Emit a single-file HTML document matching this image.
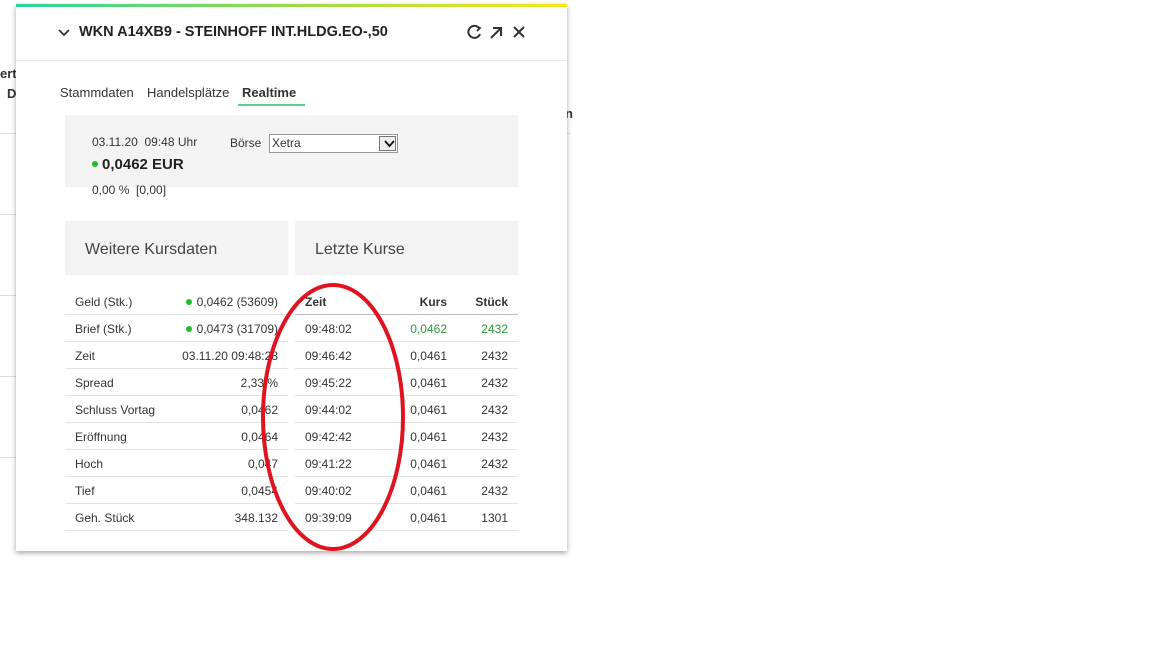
<!DOCTYPE html>
<html><head><meta charset="utf-8"><style>
body{margin:0;width:1152px;height:648px;background:#fff;font-family:"Liberation Sans",sans-serif;position:relative;overflow:hidden;color:#333}
.a{position:absolute;white-space:nowrap}
.hl{position:absolute;height:1px;background:#ddd}
.dlg{position:absolute;left:16px;top:4px;width:551px;height:547px;background:#fff;box-shadow:0 2px 5px rgba(0,0,0,.35)}
.bar{position:absolute;left:0;top:0;width:551px;height:3px;background:linear-gradient(90deg,#2bd39b,#9ad94a 50%,#f4e81c)}
.row{position:absolute;height:26px;border-bottom:1px solid #e3e3e3;font-size:12px;line-height:28px}
.row span{position:absolute}
</style></head><body>
<div class="a" style="left:0;top:66px;font-size:13px;font-weight:bold">ert</div>
<div class="a" style="left:7px;top:86px;font-size:13px;font-weight:bold">D</div>
<div class="a" style="left:565px;top:106px;font-size:13px;font-weight:bold">n</div>
<div class="hl" style="left:0;top:133px;width:570px"></div>
<div class="hl" style="left:0;top:214px;width:16px"></div>
<div class="hl" style="left:0;top:295px;width:16px"></div>
<div class="hl" style="left:0;top:376px;width:16px"></div>
<div class="hl" style="left:0;top:457px;width:16px"></div>
<div class="dlg">
<div class="bar"></div>
<svg class="a" style="left:42px;top:24px" width="12" height="10"><path d="M1 2 L6 7 L11 2" stroke="#333" stroke-width="1.8" fill="none"/></svg>
<div class="a" style="left:63px;top:20px;font-size:14.5px;font-weight:bold;color:#222">WKN A14XB9 - STEINHOFF INT.HLDG.EO-,50</div>
<svg class="a" style="left:451px;top:20px" width="64" height="16"><path d="M12 4 A6 6 0 1 0 13 10" stroke="#333" stroke-width="2" fill="none"/><path d="M9 2 L13 4 L10 7" stroke="#333" stroke-width="1.8" fill="none"/><path d="M24 14 L34 4 M26 4 L34 4 L34 12" stroke="#333" stroke-width="2" fill="none"/><path d="M47 3 L57 13 M57 3 L47 13" stroke="#333" stroke-width="2" fill="none"/></svg>
<div class="hl" style="left:0;top:56px;width:551px;background:#e5e5e5"></div>
<div class="a" style="left:44px;top:81px;font-size:13px">Stammdaten</div>
<div class="a" style="left:131px;top:81px;font-size:13px">Handelsplätze</div>
<div class="a" style="left:226px;top:81px;font-size:13px;font-weight:bold">Realtime</div>
<div class="a" style="left:222px;top:100px;width:67px;height:2px;background:#5fcf8c"></div>
<div class="a" style="left:49px;top:111px;width:453px;height:72px;background:#f3f3f3"></div>
<div class="a" style="left:76px;top:131px;font-size:12px">03.11.20&nbsp; 09:48 Uhr</div>
<div class="a" style="left:214px;top:132px;font-size:12px">Börse</div>
<div class="a" style="left:253px;top:130px;width:127px;height:17px;border:1px solid #999;background:#fff;font-size:12px;line-height:17px;text-indent:2px">Xetra<div class="a" style="right:1px;top:1px;width:15px;height:13px;border:1px solid #777;background:#eee"><svg width="15" height="13"><path d="M3 4 L7.5 9 L12 4" stroke="#111" stroke-width="1.8" fill="none"/></svg></div></div>
<div class="a" style="left:76px;top:157px;width:6px;height:6px;border-radius:50%;background:#1fbf2a"></div>
<div class="a" style="left:86px;top:152px;font-size:15px;font-weight:bold;color:#222">0,0462 EUR</div>
<div class="a" style="left:76px;top:179px;font-size:12px">0,00 %&nbsp; [0,00]</div>
<div class="a" style="left:49px;top:217px;width:223px;height:54px;background:#f3f3f3"></div>
<div class="a" style="left:279px;top:217px;width:223px;height:54px;background:#f3f3f3"></div>
<div class="a" style="left:69px;top:237px;font-size:16px;color:#444">Weitere Kursdaten</div>
<div class="a" style="left:299px;top:237px;font-size:16px;color:#444">Letzte Kurse</div>
</div>
<div id="t"></div>
<script>
var L=[["Geld (Stk.)","0,0462 (53609)",1],["Brief (Stk.)","0,0473 (31709)",1],["Zeit","03.11.20 09:48:28"],["Spread","2,33 %"],["Schluss Vortag","0,0462"],["Eröffnung","0,0464"],["Hoch","0,047"],["Tief","0,0454"],["Geh. Stück","348.132"]];
var R=[["09:48:02","0,0462","2432"],["09:46:42","0,0461","2432"],["09:45:22","0,0461","2432"],["09:44:02","0,0461","2432"],["09:42:42","0,0461","2432"],["09:41:22","0,0461","2432"],["09:40:02","0,0461","2432"],["09:39:09","0,0461","1301"]];
var h="";
L.forEach(function(r,i){var y=288+i*27;h+='<div class="row" style="left:65px;top:'+y+'px;width:223px"><span style="left:10px">'+r[0]+'</span><span style="right:10px">'+(r[2]?'<b style="display:inline-block;width:6px;height:6px;border-radius:50%;background:#1fbf2a;margin-right:5px;vertical-align:1px"></b>':'')+r[1]+'</span></div>';});
h+='<div class="row" style="left:295px;top:288px;width:223px;border-bottom-color:#bbb;font-weight:bold"><span style="left:10px">Zeit</span><span style="right:71px">Kurs</span><span style="right:10px">Stück</span></div>';
R.forEach(function(r,i){var y=315+i*27;var c=i==0?'color:#2a9a3a':'';h+='<div class="row" style="left:295px;top:'+y+'px;width:223px"><span style="left:10px">'+r[0]+'</span><span style="right:71px;'+c+'">'+r[1]+'</span><span style="right:10px;'+c+'">'+r[2]+'</span></div>';});
document.getElementById("t").innerHTML=h;
</script>
<svg class="a" style="left:0;top:0" width="1152" height="648"><ellipse cx="333" cy="417" rx="70" ry="132" stroke="#e01420" stroke-width="4" fill="none"/></svg>
</body></html>
